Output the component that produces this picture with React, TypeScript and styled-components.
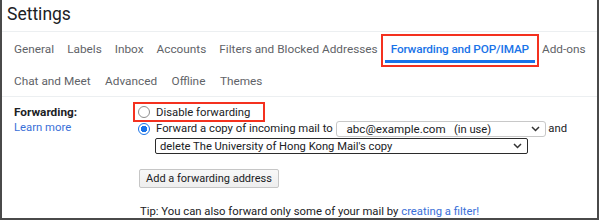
import React from "react";
import styled, { createGlobalStyle } from "styled-components";

const GlobalStyle = createGlobalStyle`
    html, body {
        margin: 0;
        padding: 0;
        background: #ffffff;
    }
    body {
        font-family: Roboto, "Liberation Sans", Arial, sans-serif;
        color: #202124;
    }
`;

const Frame = styled.div`
    width: 599px;
    height: 220px;
    box-sizing: border-box;
    border-left: 2px solid #4a4a4a;
    border-right: 2px solid #4a4a4a;
    border-bottom: 2px solid #4a4a4a;
    overflow: hidden;
    background: #fff;
`;

const Title = styled.div`
    height: 31px;
    border-bottom: 1px solid #eceff1;
    padding-left: 5px;
    font-size: 17.5px;
    line-height: 29px;
    color: #202124;
`;

const Tabs = styled.nav`
    border-bottom: 1px solid #eceff1;
    padding-left: 12px;
`;

const TabRow = styled.div<{ $gap: number }>`
    display: flex;
    height: 32px;
    padding-top: 6px;
    box-sizing: border-box;
    gap: ${(p) => p.$gap}px;
`;

const Tab = styled.a<{ $active?: boolean }>`
    display: flex;
    height: 25px;
    box-sizing: border-box;
    line-height: 22px;
    font-size: 11.8px;
    letter-spacing: ${(p) => (p.$active ? "-0.15px" : "0")};
    white-space: nowrap;
    color: ${(p) => (p.$active ? "#1a73e8" : "#5f6368")};
    font-weight: ${(p) => (p.$active ? 500 : 400)};
    border-bottom: 3px solid ${(p) => (p.$active ? "#1a73e8" : "transparent")};
    padding: 0 ${(p) => (p.$active ? "6px" : "0")};
    margin: 0 ${(p) => (p.$active ? "-6px" : "0")};
    outline: ${(p) => (p.$active ? "2px solid #f4311f" : "none")};
    outline-offset: 2px;
    cursor: pointer;
`;

const Section = styled.div`
    display: grid;
    grid-template-columns: 124px 1fr;
    padding: 5px 0 0 12px;
    font-size: 11.3px;
`;

const LabelCol = styled.div`
    padding-top: 2px;
    line-height: 16px;
`;

const Label = styled.div`
    font-weight: 700;
    font-size: 11.8px;
    color: #202124;
`;

const Link = styled.a`
    color: #3a6fd8;
    text-decoration: none;
    cursor: pointer;
`;

const Options = styled.div`
    display: flex;
    flex-direction: column;
    align-items: flex-start;
    margin-left: -5px;
`;

const Highlight = styled.div`
    display: flex;
    align-items: center;
    border: 2px solid #f4311f;
    padding: 0 13px 0 3px;
    height: 20px;
    box-sizing: border-box;
`;

const OptionRow = styled.div`
    display: flex;
    align-items: center;
    height: 17px;
    margin-top: -2px;
    padding-left: 5px;
    white-space: nowrap;
`;

const Radio = styled.span<{ $checked?: boolean }>`
    width: 12px;
    height: 12px;
    box-sizing: border-box;
    border-radius: 50%;
    border: 1px solid ${(p) => (p.$checked ? "#1a73e8" : "#8e8e8e")};
    background: ${(p) =>
        p.$checked ? "radial-gradient(circle, #1a73e8 0 3px, #fff 3.5px)" : "#fff"};
    margin-right: 6px;
    flex: none;
`;

const Select = styled.div<{ $width: number; $dark?: boolean }>`
    display: flex;
    align-items: center;
    justify-content: space-between;
    width: ${(p) => p.$width}px;
    height: 16px;
    box-sizing: border-box;
    border: ${(p) => (p.$dark ? "1.5px solid #2b2b2b" : "1px solid #c8c8c8")};
    border-radius: ${(p) => (p.$dark ? "2px" : "3px")};
    padding: 0 5px 0 ${(p) => (p.$dark ? "4px" : "10px")};
    background: #fff;
    color: #202124;
    white-space: pre;
`;

const SelectText = styled.span<{ $big?: boolean }>`
    font-size: ${(p) => (p.$big ? "11.6px" : "11.2px")};
`;

const Chevron = () => (
    <svg width="9" height="6" viewBox="0 0 9 6">
        <path d="M1 1l3.5 3.5L8 1" fill="none" stroke="#333" strokeWidth="1.5" />
    </svg>
);

const SecondSelect = styled.div`
    margin-top: 1px;
    margin-left: 22px;
`;

const Button = styled.button`
    margin: 15px 0 0 6px;
    height: 19px;
    padding: 0 6px;
    border: 1px solid #c6c6c6;
    border-radius: 2px;
    background: linear-gradient(#f8f8f8, #eeeeee);
    font-family: Roboto, "Liberation Sans", Arial, sans-serif;
    font-size: 11px;
    color: #202124;
    line-height: 17px;
`;

const Tip = styled.div`
    margin: 16px 0 0 7px;
    line-height: 16px;
    white-space: nowrap;
`;

const topTabs = ["General", "Labels", "Inbox", "Accounts", "Filters and Blocked Addresses"];
const bottomTabs = ["Chat and Meet", "Advanced", "Offline", "Themes"];

export default function App() {
    return (
        <>
            <GlobalStyle />
            <Frame>
                <Title>Settings</Title>
                <Tabs>
                    <TabRow $gap={13}>
                        {topTabs.map((t) => (
                            <Tab key={t}>{t}</Tab>
                        ))}
                        <Tab $active>Forwarding and POP/IMAP</Tab>
                        <Tab>Add-ons</Tab>
                    </TabRow>
                    <TabRow $gap={14.5}>
                        {bottomTabs.map((t) => (
                            <Tab key={t}>{t}</Tab>
                        ))}
                    </TabRow>
                </Tabs>
                <Section>
                    <LabelCol>
                        <Label>Forwarding:</Label>
                        <Link>Learn more</Link>
                    </LabelCol>
                    <Options>
                        <Highlight>
                            <Radio />
                            Disable forwarding
                        </Highlight>
                        <OptionRow>
                            <Radio $checked />
                            Forward a copy of incoming mail to&nbsp;
                            <Select $width={210}>
                                <span>
                                    <SelectText $big>abc@example.com</SelectText>
                                    <SelectText>{"   (in use)"}</SelectText>
                                </span>
                                <Chevron />
                            </Select>
                            &nbsp;and
                        </OptionRow>
                        <SecondSelect>
                            <Select $width={373} $dark>
                                <SelectText>delete The University of Hong Kong Mail's copy</SelectText>
                                <Chevron />
                            </Select>
                        </SecondSelect>
                        <Button>Add a forwarding address</Button>
                        <Tip>
                            Tip: You can also forward only some of your mail by <Link>creating a filter!</Link>
                        </Tip>
                    </Options>
                </Section>
            </Frame>
        </>
    );
}
